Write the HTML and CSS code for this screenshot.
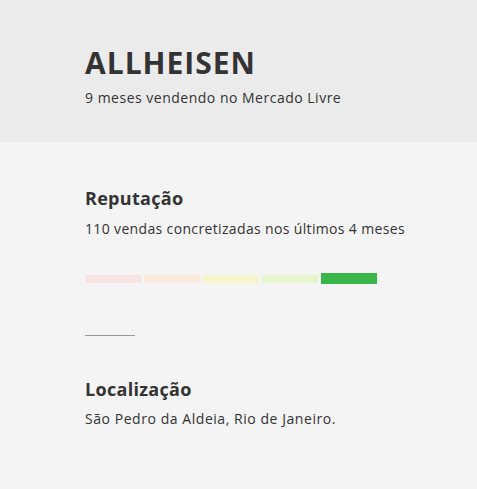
FILE: index.html
```html
<!DOCTYPE html>
<html lang="pt">
<head>
<meta charset="utf-8">
<link rel="stylesheet" href="styles.css">
</head>
<body>
<header class="seller-header">
  <h1 class="seller-name">ALLHEISEN</h1>
  <p class="seller-since">9 meses vendendo no Mercado Livre</p>
</header>
<main class="seller-info">
  <section class="block">
    <h2 class="block-title">Reputação</h2>
    <p class="block-text">110 vendas concretizadas nos últimos 4 meses</p>
    <div class="thermometer">
      <span class="level level-1"></span>
      <span class="level level-2"></span>
      <span class="level level-3"></span>
      <span class="level level-4"></span>
      <span class="level level-5 active"></span>
    </div>
  </section>
  <hr class="divider">
  <section class="block">
    <h2 class="block-title">Localização</h2>
    <p class="block-text loc">São Pedro da Aldeia, Rio de Janeiro.</p>
  </section>
</main>
</body>
</html>
```

FILE: styles.css
```css
html, body {
  margin: 0;
  padding: 0;
}
body {
  background: #f4f4f4;
  color: #333;
  font-family: "Open Sans", "Liberation Sans", sans-serif;
  height: 489px;
}
.seller-header {
  background: #ebebeb;
  height: 142px;
  box-sizing: border-box;
  padding: 46px 20px 0 85px;
}
.seller-name {
  margin: 0;
  font-size: 30px;
  line-height: 34px;
  font-weight: 700;
  letter-spacing: 1px;
  color: #333;
}
.seller-since {
  margin: 9px 0 0;
  font-size: 14px;
  line-height: 18px;
  letter-spacing: 0.5px;
}
.seller-info {
  padding: 45px 20px 0 85px;
}
.block-title {
  margin: 0;
  font-size: 18px;
  line-height: 22px;
  font-weight: 700;
  letter-spacing: 0.3px;
}
.block-text {
  margin: 11px 0 0;
  font-size: 14px;
  line-height: 18px;
  letter-spacing: 0.35px;
  white-space: nowrap;
}
.block-text.loc {
  letter-spacing: 0.55px;
  margin-top: 10px;
}
.thermometer {
  display: flex;
  align-items: center;
  gap: 3px;
  margin-top: 35px;
}
.level {
  width: 56px;
  height: 8px;
}
.level-1 { background: #f8e3e3; }
.level-2 { background: #f9eadb; }
.level-3 { background: #f6f5cc; }
.level-4 { background: #e6f5cc; }
.level-5 { background: #39b54a; }
.level.active { height: 11px; }
.divider {
  width: 50px;
  margin: 51px 0 42px;
  border: 0;
  border-top: 1px solid #999;
}
```
